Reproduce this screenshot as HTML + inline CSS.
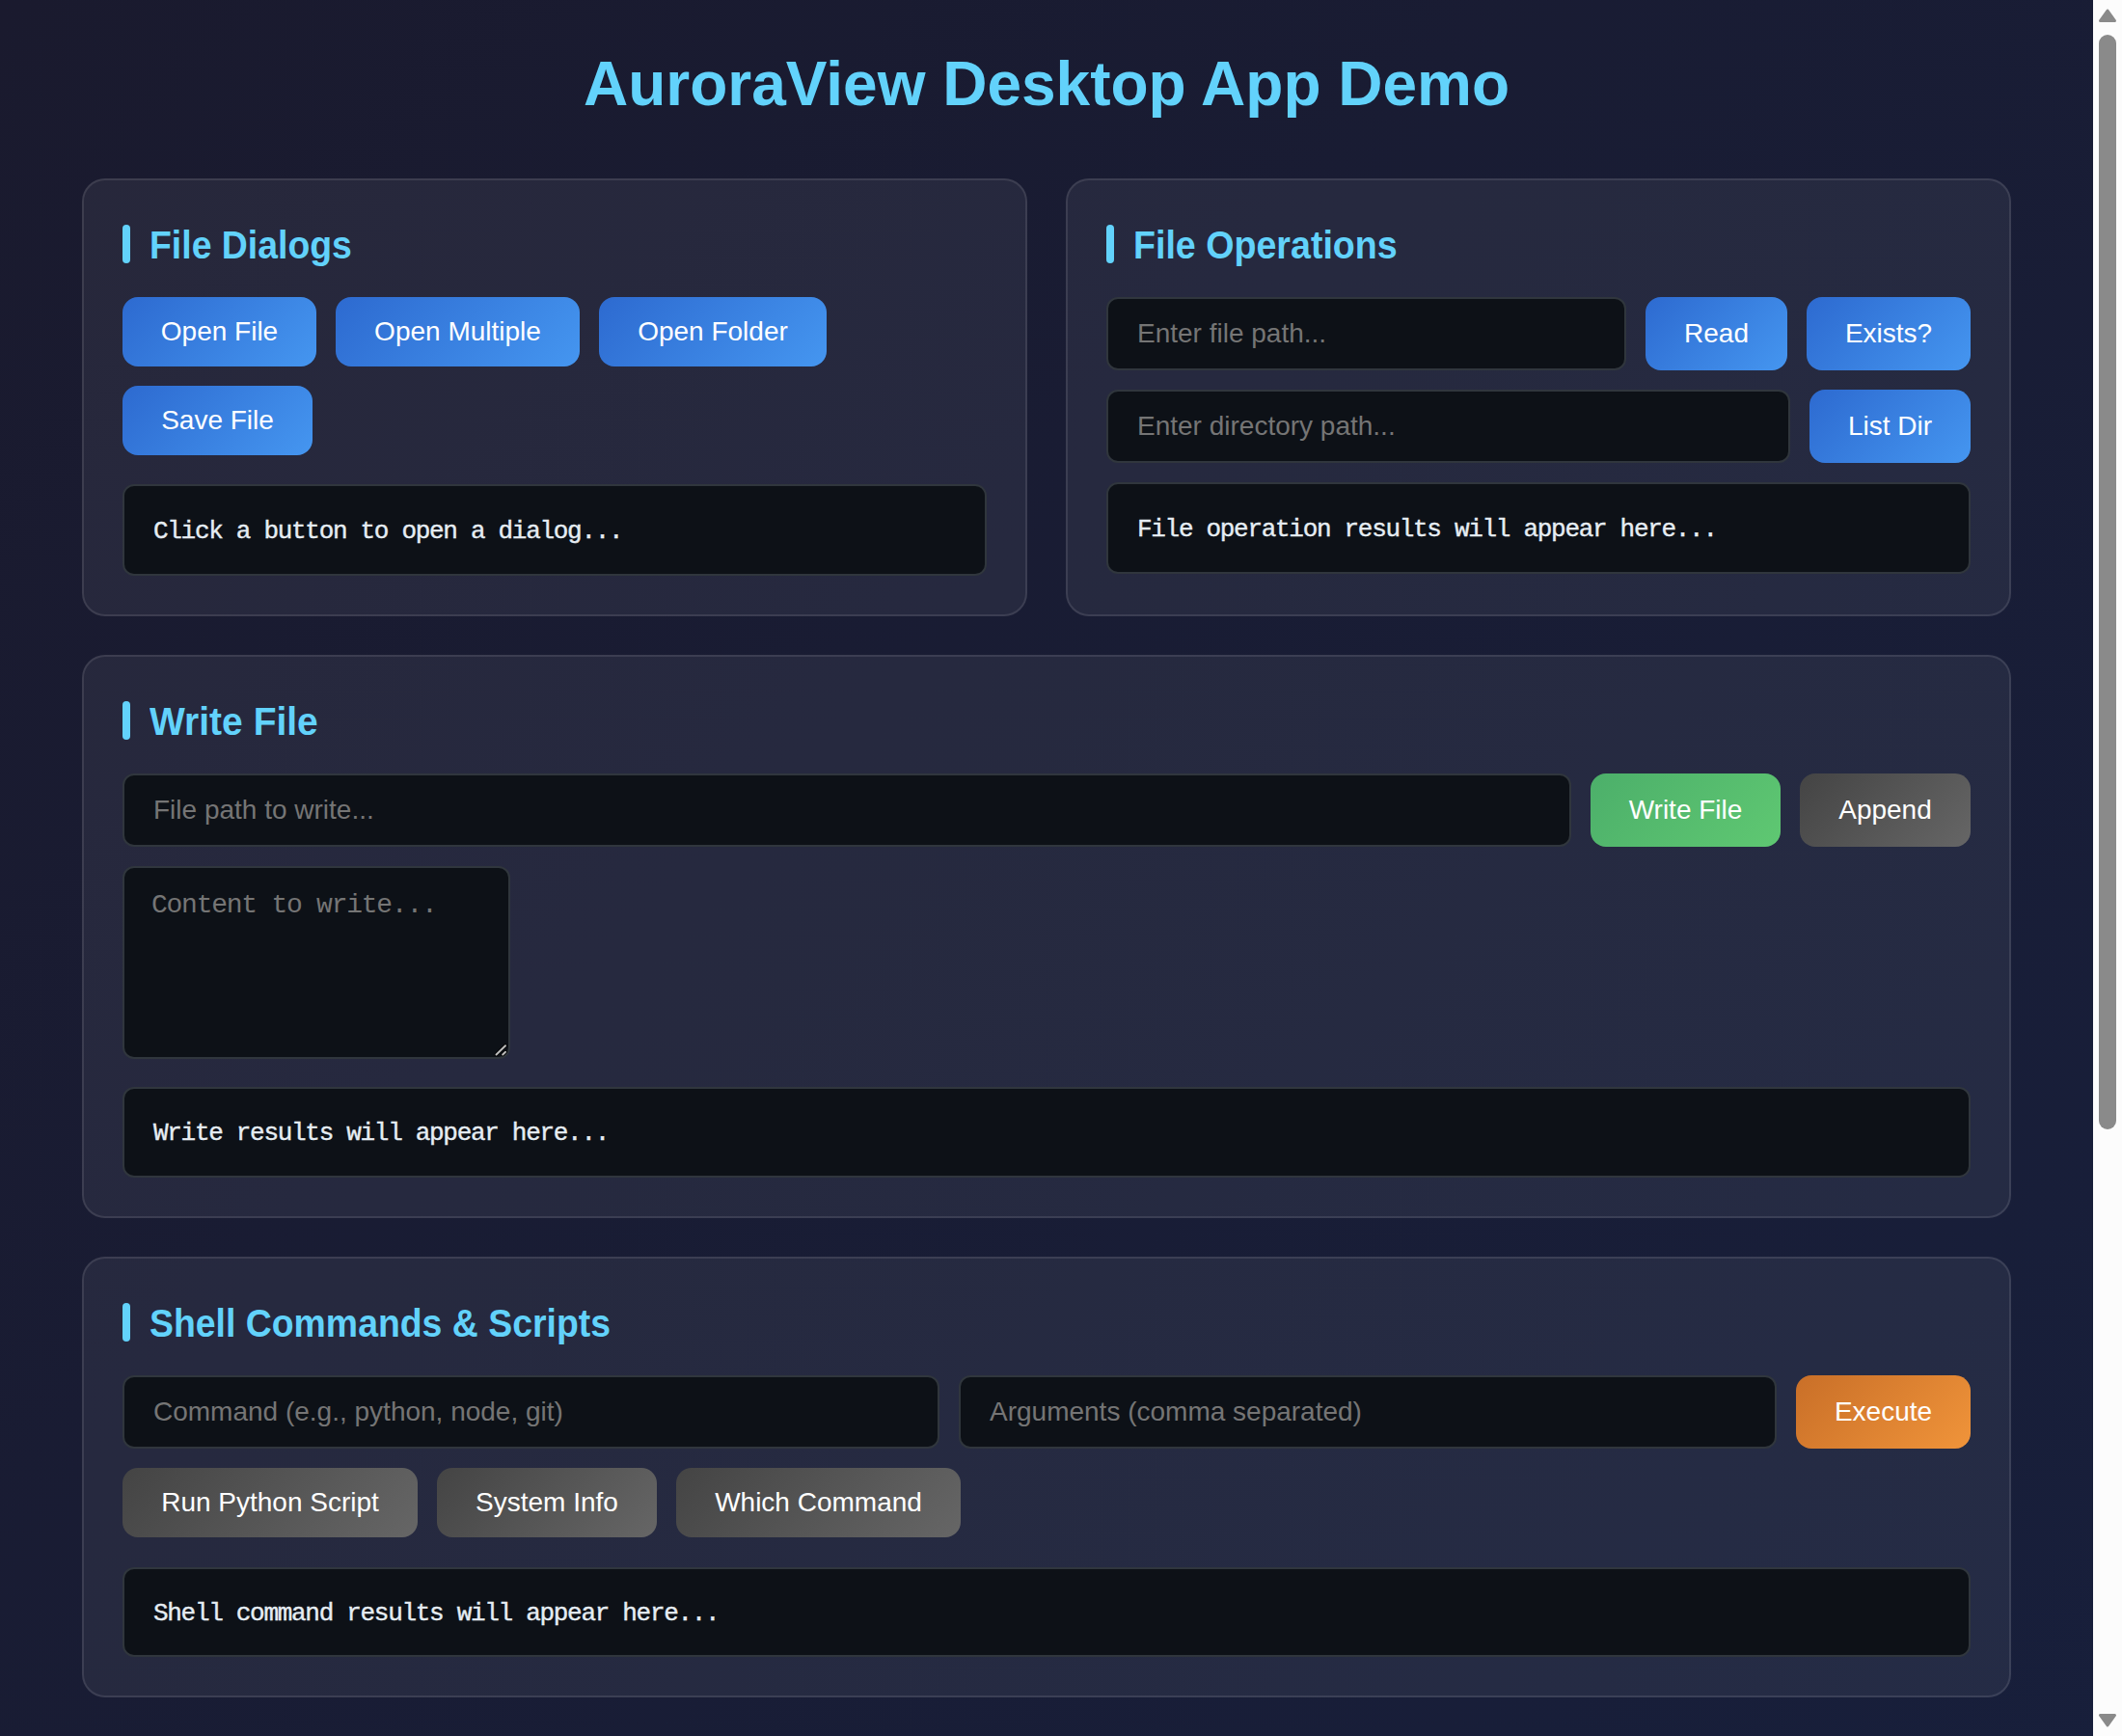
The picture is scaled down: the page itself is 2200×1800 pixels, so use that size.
<!DOCTYPE html>
<html><head><meta charset="utf-8">
<style>
*{box-sizing:border-box;margin:0;padding:0}
html,body{width:2200px;height:1800px;overflow:hidden}
body{position:relative;background:#1a1a2e;font-family:"Liberation Sans",sans-serif}
.bg{position:absolute;left:0;top:0;width:2170px;height:2760px;background:linear-gradient(135deg,#1a1a2e 0%,#17203e 100%)}
.abs{position:absolute}
.h1{position:absolute;left:0;width:2170px;top:45px;height:85px;text-align:center;color:#62d2fb;font:bold 64px/85px "Liberation Sans",sans-serif}
.card{position:absolute;background:rgba(255,255,255,0.06);border:2px solid rgba(255,255,255,0.1);border-radius:24px}
.bar{position:absolute;width:8px;height:40px;border-radius:4px;background:#62d2fb}
.h2{position:absolute;color:#62d2fb;font:bold 40px/48px "Liberation Sans",sans-serif;white-space:nowrap;transform-origin:0 0}
.btn{position:absolute;border-radius:16px;color:#fff;font:28px/32px "Liberation Sans",sans-serif;display:flex;align-items:center;justify-content:center;white-space:nowrap}
.blue{background:linear-gradient(135deg,#2d6ad0 0%,#4596f0 100%)}
.green{background:linear-gradient(135deg,#4caf6a 0%,#5fc872 100%)}
.gray{background:linear-gradient(135deg,#444 0%,#666 100%)}
.orange{background:linear-gradient(135deg,#c96f28 0%,#f0943a 100%)}
.inp{position:absolute;background:#0d1117;border:2px solid #30363d;border-radius:12px;color:#757575;font:28px/32px "Liberation Sans",sans-serif;display:flex;align-items:center;padding-left:30px;white-space:nowrap}
.out{position:absolute;background:#0d1117;border:2px solid #30363d;border-radius:12px;color:#e6edf3;font:26px/32px "Liberation Mono",monospace;letter-spacing:-1.3px;padding-left:30px;white-space:nowrap;-webkit-text-stroke:0.4px currentColor}
.sb{position:absolute;left:2170px;top:0;width:30px;height:1800px;background:#fcfcfc}
</style></head><body>
<div class="bg"></div>
<div class="h1">AuroraView Desktop App Demo</div>

<!-- Card 1 -->
<div class="card" style="left:85px;top:185px;width:980px;height:454px"></div>
<div class="bar" style="left:127px;top:233px"></div>
<div class="h2" style="left:155px;top:230px;transform:scaleX(0.935)">File Dialogs</div>
<div class="btn blue" style="left:127px;top:308px;width:201px;height:72px">Open File</div>
<div class="btn blue" style="left:348px;top:308px;width:253px;height:72px">Open Multiple</div>
<div class="btn blue" style="left:621px;top:308px;width:236px;height:72px">Open Folder</div>
<div class="btn blue" style="left:127px;top:400px;width:197px;height:72px">Save File</div>
<div class="out" style="left:127px;top:502px;width:896px;height:95px;padding-top:31px">Click a button to open a dialog...</div>

<!-- Card 2 -->
<div class="card" style="left:1105px;top:185px;width:980px;height:454px"></div>
<div class="bar" style="left:1147px;top:233px"></div>
<div class="h2" style="left:1175px;top:230px;transform:scaleX(0.94)">File Operations</div>
<div class="inp" style="left:1147px;top:308px;width:539px;height:76px">Enter file path...</div>
<div class="btn blue" style="left:1706px;top:308px;width:147px;height:76px">Read</div>
<div class="btn blue" style="left:1873px;top:308px;width:170px;height:76px">Exists?</div>
<div class="inp" style="left:1147px;top:404px;width:709px;height:76px">Enter directory path...</div>
<div class="btn blue" style="left:1876px;top:404px;width:167px;height:76px">List Dir</div>
<div class="out" style="left:1147px;top:500px;width:896px;height:95px;padding-top:31px">File operation results will appear here...</div>

<!-- Card 3 -->
<div class="card" style="left:85px;top:679px;width:2000px;height:584px"></div>
<div class="bar" style="left:127px;top:727px"></div>
<div class="h2" style="left:155px;top:724px;transform:scaleX(0.975)">Write File</div>
<div class="inp" style="left:127px;top:802px;width:1502px;height:76px">File path to write...</div>
<div class="btn green" style="left:1649px;top:802px;width:197px;height:76px">Write File</div>
<div class="btn gray" style="left:1866px;top:802px;width:177px;height:76px">Append</div>
<div class="out" style="left:127px;top:898px;width:402px;height:200px;padding-top:23px;padding-left:28px;color:#757575;font-size:28px;letter-spacing:-1.25px;-webkit-text-stroke:0">Content to write...</div>
<div class="out" style="left:127px;top:1127px;width:1916px;height:94px;padding-top:30px">Write results will appear here...</div>

<svg class="abs" style="left:500px;top:1070px" width="30" height="30" viewBox="0 0 30 30">
<path d="M14.5 23.5 L24 14.2 M21.2 23.5 L24 20.8" stroke="#000" stroke-width="3.6" stroke-linecap="round"/>
<path d="M14.5 23.5 L24 14.2 M21.2 23.5 L24 20.8" stroke="#bdbdbd" stroke-width="2" stroke-linecap="round"/>
</svg>

<!-- Card 4 -->
<div class="card" style="left:85px;top:1303px;width:2000px;height:457px"></div>
<div class="bar" style="left:127px;top:1351px"></div>
<div class="h2" style="left:155px;top:1348px;transform:scaleX(0.935)">Shell Commands &amp; Scripts</div>
<div class="inp" style="left:127px;top:1426px;width:847px;height:76px">Command (e.g., python, node, git)</div>
<div class="inp" style="left:994px;top:1426px;width:848px;height:76px">Arguments (comma separated)</div>
<div class="btn orange" style="left:1862px;top:1426px;width:181px;height:76px">Execute</div>
<div class="btn gray" style="left:127px;top:1522px;width:306px;height:72px">Run Python Script</div>
<div class="btn gray" style="left:453px;top:1522px;width:228px;height:72px">System Info</div>
<div class="btn gray" style="left:701px;top:1522px;width:295px;height:72px">Which Command</div>
<div class="out" style="left:127px;top:1625px;width:1916px;height:93px;padding-top:30px">Shell command results will appear here...</div>

<div class="sb"></div>
<svg class="abs" style="left:2170px;top:0" width="30" height="1800" viewBox="0 0 30 1800">
<path d="M15 11 L22.5 21.5 L7.5 21.5 Z" fill="#8a8a8a" stroke="#8a8a8a" stroke-width="3" stroke-linejoin="round"/>
<rect x="6" y="36" width="18" height="1135" rx="9" fill="#8a8a8a"/>
<path d="M7.5 1778.5 L22.5 1778.5 L15 1789 Z" fill="#8a8a8a" stroke="#8a8a8a" stroke-width="3" stroke-linejoin="round"/>
</svg>
</body></html>
